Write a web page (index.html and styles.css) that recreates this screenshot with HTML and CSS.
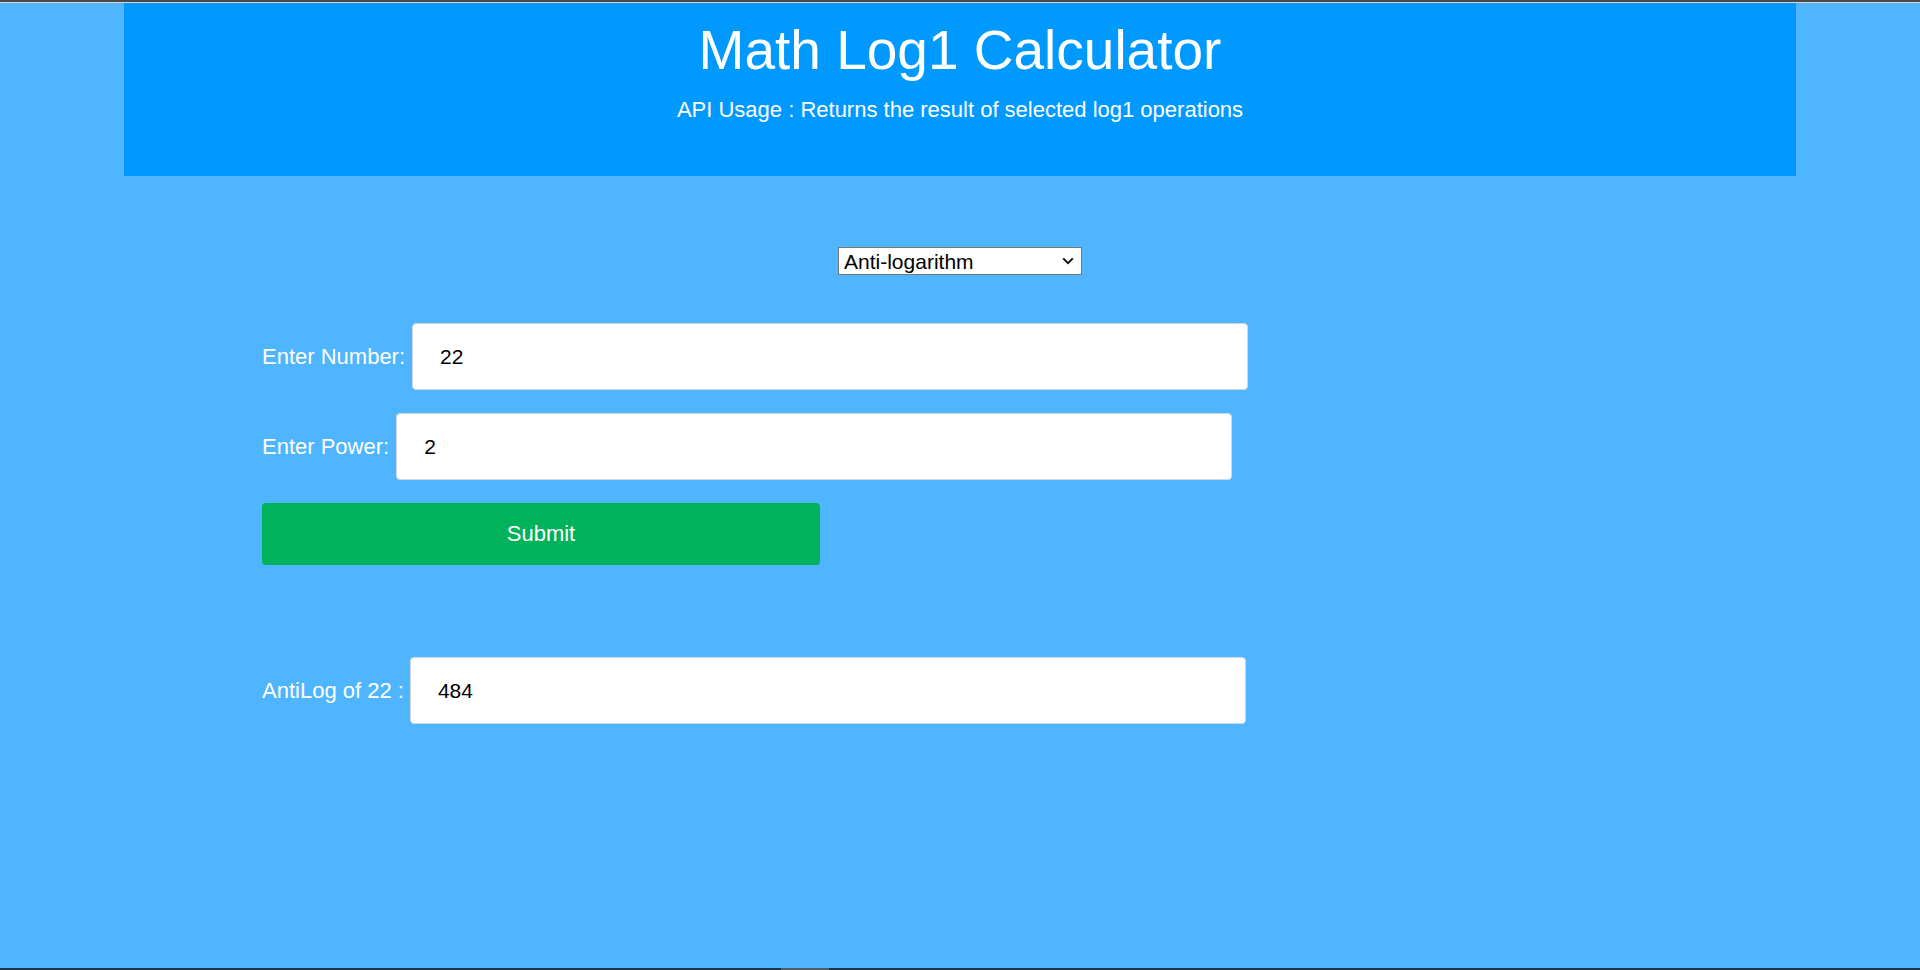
FILE: index.html
```html
<!DOCTYPE html>
<html lang="en">
<head>
<meta charset="utf-8">
<title>Math Log1 Calculator</title>
<link rel="stylesheet" href="styles.css">
</head>
<body>
<div class="top-strip"></div>
<header class="header">
  <h1 class="title">Math Log1 Calculator</h1>
  <p class="subtitle">API Usage : Returns the result of selected log1 operations</p>
</header>
<main class="main">
  <div class="select-row">
    <div class="select-wrap">
      <select class="op-select">
        <option>Anti-logarithm</option>
        <option>Logarithm</option>
      </select>
      <svg class="chevron" width="12" height="8" viewBox="0 0 12 8"><path d="M1.2 1.4 L6 6.2 L10.8 1.4" fill="none" stroke="#111" stroke-width="2"/></svg>
    </div>
  </div>
  <form class="form">
    <div class="row">
      <label class="label">Enter Number:</label>
      <input class="field" type="text" value="22">
    </div>
    <div class="row">
      <label class="label">Enter Power:</label>
      <input class="field" type="text" value="2">
    </div>
    <button class="submit" type="button">Submit</button>
    <div class="row row-result">
      <label class="label">AntiLog of 22 :</label>
      <input class="field" type="text" value="484">
    </div>
  </form>
</main>
<div class="bottom-strip"><span class="bottom-mark"></span></div>
</body>
</html>
```
FILE: styles.css
```css
html, body {
  margin: 0;
  padding: 0;
}
body {
  background: #4fb5ff;
  font-family: "Liberation Sans", Arial, sans-serif;
  color: #fff;
  min-height: 100vh;
  display: flex;
  flex-direction: column;
}
.top-strip {
  height: 2px;
  background: #4a4a4a;
  border-bottom: 1px solid #d6d6d6;
}
.header {
  width: 1672px;
  margin: 0 auto;
  box-sizing: border-box;
  height: 173px;
  padding-top: 15px;
  background: #0099ff;
  text-align: center;
}
.title {
  margin: 0;
  font-size: 55px;
  line-height: 64px;
  font-weight: normal;
}
.subtitle {
  margin: 15px 0 0;
  font-size: 22px;
  line-height: 26px;
}
.main {
  padding-left: 262px;
}
.select-row {
  display: flex;
  justify-content: center;
  margin-top: 71px;
  padding-right: 262px;
}
.select-wrap {
  position: relative;
  width: 244px;
  height: 28px;
}
.op-select {
  appearance: none;
  -webkit-appearance: none;
  width: 244px;
  height: 28px;
  box-sizing: border-box;
  border: 1px solid #767676;
  border-radius: 0;
  background: #fff;
  color: #000;
  font-family: "Liberation Sans", Arial, sans-serif;
  font-size: 21px;
  padding: 0 0 0 5px;
  margin: 0;
}
.chevron {
  position: absolute;
  right: 8px;
  top: 10px;
  pointer-events: none;
}
.form {
  margin-top: 48px;
  display: flex;
  flex-direction: column;
  align-items: flex-start;
}
.row {
  display: flex;
  align-items: center;
  gap: 7px;
  margin-bottom: 23px;
}
.label {
  font-size: 22px;
}
.field {
  width: 836px;
  height: 67px;
  box-sizing: border-box;
  border: 1px solid #cfd8df;
  border-radius: 4px;
  background: #fff;
  color: #000;
  font-family: "Liberation Sans", Arial, sans-serif;
  font-size: 21px;
  padding: 0 0 0 27px;
  margin: 0;
}
.submit {
  width: 558px;
  height: 62px;
  margin: 0;
  border: none;
  border-radius: 4px;
  background: #00b259;
  color: #fff;
  font-family: "Liberation Sans", Arial, sans-serif;
  font-size: 22px;
  padding: 0;
}
.row-result {
  margin-top: 92px;
  gap: 6px;
}
.bottom-strip {
  margin-top: auto;
  height: 2px;
  background: #17364d;
  display: flex;
}
.bottom-mark {
  margin-left: 781px;
  width: 48px;
  background: #4b5d6b;
}
```
